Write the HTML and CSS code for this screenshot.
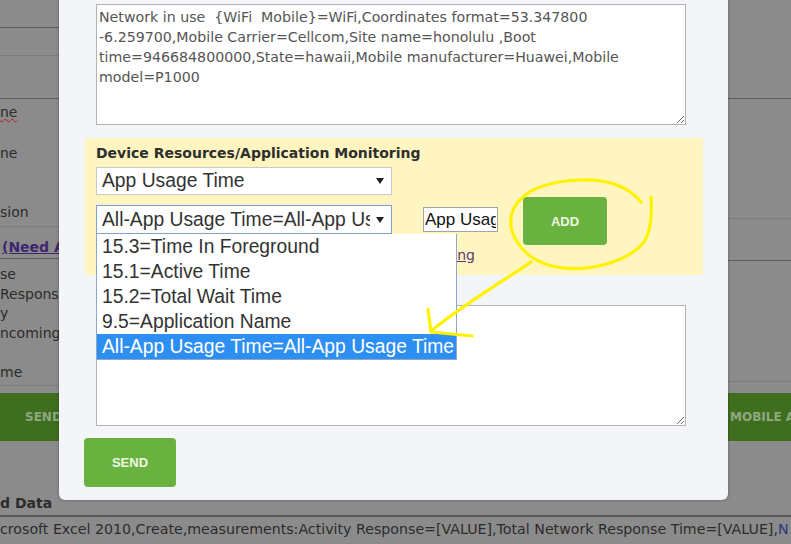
FILE: index.html
```html
<!DOCTYPE html>
<html lang="en">
<head>
<meta charset="utf-8">
<title>Device Resources</title>
<link rel="stylesheet" href="styles.css">
</head>
<body>
<div class="page">
  <div class="cols">
    <div class="col">
      <div class="row dk h28"></div>
      <div class="row lt h28"></div>
      <div class="row dk h43"></div>
      <div class="row lt h128 pad3">
        <div class="t"><span class="spell">ne</span></div>
        <div class="t mt21">ne</div>
        <div class="t mt39">sion</div>
      </div>
      <div class="row dk h32 pad10"><a class="need">(Need Approval)</a></div>
      <div class="row lt h127 pad6">
        <div class="t2">se</div>
        <div class="t2">Response Time</div>
        <div class="t2">y</div>
        <div class="t2">ncoming</div>
        <div class="t2"></div>
        <div class="t2">me</div>
      </div>
    </div>
    <div class="col">
      <div class="row dk h99"></div>
      <div class="row lt h120"></div>
      <div class="row dk h42"></div>
      <div class="row lt h121"></div>
    </div>
  </div>
  <div class="greenbar">
    <span class="gb-left">SEND</span>
    <span class="gb-right">MOBILE APP</span>
  </div>
  <div class="bottom">
    <div class="bottom-title">d Data</div>
    <div class="data-line">crosoft Excel 2010,Create,measurements:Activity Response=[VALUE],Total Network Response Time=[VALUE],<span class="navy">N</span></div>
  </div>
</div>

<div class="modal">
  <textarea class="ta ta1" readonly>Network in use  {WiFi  Mobile}=WiFi,Coordinates format=53.347800 -6.259700,Mobile Carrier=Cellcom,Site name=honolulu ,Boot time=946684800000,State=hawaii,Mobile manufacturer=Huawei,Mobile model=P1000</textarea>
  <div class="panel">
    <div class="panel-title">Device Resources/Application Monitoring</div>
    <div class="sel sel1"><span class="sel-text">App Usage Time</span><svg class="caret" viewBox="0 0 8 6"><path d="M0 0H8L4 6Z"/></svg></div>
    <div class="ctrl-row">
      <div class="sel-wrap">
        <div class="sel sel2"><span class="sel-text">All-App Usage Time=All-App Usage Time</span><svg class="caret" viewBox="0 0 8 6"><path d="M0 0H8L4 6Z"/></svg></div>
        <ul class="dropdown">
          <li>15.3=Time In Foreground</li>
          <li>15.1=Active Time</li>
          <li>15.2=Total Wait Time</li>
          <li>9.5=Application Name</li>
          <li class="hl">All-App Usage Time=All-App Usage Time</li>
        </ul>
      </div>
      <input class="small-input" type="text" value="App Usage Time" readonly>
      <button class="btn btn-add" type="button">ADD</button>
    </div>
    <div class="link-row"><a class="plink">Add New Monitoring</a></div>
  </div>
  <textarea class="ta ta2" readonly></textarea>
  <button class="btn btn-send" type="button">SEND</button>
</div>

<svg class="annot" viewBox="0 0 791 544" width="791" height="544">
  <path d="M641 202 C628 186 606 179 580 180 C548 181 522 190 513 210 C505 230 520 258 552 266 C585 274 628 262 644 242 C652 230 652 212 651 197"/>
  <path d="M531 262 C505 280 470 300 431 331"/>
  <path d="M428 309 L431 332 L472 336"/>
</svg>
</body>
</html>
```

FILE: styles.css
```css
* { box-sizing: border-box; }
html, body { margin: 0; padding: 0; }
body {
  width: 791px;
  height: 544px;
  overflow: hidden;
  position: relative;
  background: #8b8b8b;
  font-family: "DejaVu Sans", sans-serif;
  font-size: 13px;
  color: #2b2b2b;
}

/* background page (dimmed) */
.cols { display: flex; height: 393px; }
.col { flex: 1 1 50%; display: flex; flex-direction: column; }
.row { flex: none; white-space: nowrap; overflow: hidden; }
.dk { border-bottom: 1px solid #5e5e5e; }
.lt { border-bottom: 1px solid #7c7c7c; }
.h28 { height: 28px; }
.h43 { height: 43px; }
.h128 { height: 128px; }
.h32 { height: 32px; }
.h127 { height: 127px; }
.h99 { height: 99px; }
.h120 { height: 120px; }
.h42 { height: 42px; }
.h121 { height: 121px; }
.pad3 { padding-top: 3px; }
.pad6 { padding-top: 6px; }
.pad10 { padding-top: 10px; }
.t { line-height: 20px; font-size: 14px; }
.mt21 { margin-top: 21px; }
.mt39 { margin-top: 39px; }
.t2 { line-height: 19.5px; height: 19.5px; font-size: 14px; }
.spell { text-decoration: underline wavy #b0202a; text-decoration-thickness: 1px; }
.need {
  display: block;
  line-height: 20px;
  padding-left: 2px;
  font-size: 14px;
  font-weight: bold;
  color: #3e2670;
  text-decoration: underline;
}

.greenbar {
  display: grid;
  grid-template-columns: 730px 1fr;
  height: 48px;
  align-items: center;
  background: #3f6e1e;
  color: #8fa882;
  font-size: 12px;
  font-weight: bold;
  white-space: nowrap;
  overflow: hidden;
}
.gb-left { padding-left: 25px; }

.bottom { padding-top: 52px; }
.bottom-title {
  font-size: 14px;
  font-weight: bold;
  line-height: 20px;
  height: 24px;
  border-bottom: 2px solid #5a5a5a;
}
.data-line {
  padding-top: 2px;
  line-height: 20px;
  font-size: 14.2px;
  white-space: nowrap;
}
.navy { color: #263a78; }

/* modal */
.modal {
  position: absolute;
  left: 59px;
  top: -30px;
  width: 669px;
  padding: 34px 25px 13px 26px;
  background: #f3f5f9;
  border-radius: 6px;
  box-shadow: 0 0 3px rgba(0, 0, 0, 0.35);
}
.ta {
  display: block;
  width: 590px;
  height: 121px;
  margin: 0 0 0 11px;
  padding: 2px 2px;
  border: 1px solid #b3b3b3;
  background: #fff;
  font-family: "DejaVu Sans", sans-serif;
  font-size: 14.2px;
  line-height: 20px;
  color: #555;
  outline: none;
}
.ta1 { margin-bottom: 13px; }
.ta2 { margin-top: 30px; }

.panel {
  height: 137px;
  background: #fff5c1;
  padding: 6px 11px 0;
}
.panel-title {
  font-size: 14px;
  font-weight: bold;
  line-height: 18px;
  color: #2e2e2e;
}
.sel {
  display: flex;
  align-items: center;
  width: 296px;
  background: #fff;
  border: 1px solid #c9c9c9;
  padding: 0 7px 0 5px;
  font-family: "Liberation Sans", Arial, sans-serif;
  font-size: 19.3px;
  color: #333;
}
.sel1 { height: 28px; margin-top: 5px; }
.sel2 { height: 29px; border-color: #7ea2d2; }
.sel-text { flex: 1; overflow: hidden; white-space: nowrap; }
.caret { width: 8px; height: 6px; margin-left: 6px; fill: #222; flex: none; }

.ctrl-row { display: flex; align-items: flex-start; margin-top: 2px; height: 48px; }
.sel-wrap { position: relative; margin-top: 8px; }
.dropdown {
  position: absolute;
  top: 100%;
  left: 0;
  width: 361px;
  margin: 0;
  padding: 0;
  list-style: none;
  background: #fff;
  border: 1px solid #8da6cc;
  border-top: none;
  font-family: "Liberation Sans", Arial, sans-serif;
  font-size: 19.3px;
  color: #333;
  z-index: 5;
}
.dropdown li { height: 25px; line-height: 25px; padding-left: 5px; white-space: nowrap; }
.dropdown .hl { background: #2e8ff2; color: #fff; }

.small-input {
  width: 75px;
  height: 25px;
  margin: 10px 0 0 31px;
  padding: 0 1px;
  border: 1px solid #a3a3a3;
  background: #fff;
  font-family: "Liberation Sans", Arial, sans-serif;
  font-size: 17px;
  color: #111;
  outline: none;
}
.btn {
  border: none;
  border-radius: 4px;
  background: #6ab23f;
  color: #eef6e4;
  font-family: "Liberation Sans", Arial, sans-serif;
  font-size: 13px;
  font-weight: bold;
  padding: 0;
}
.btn-add { width: 84px; height: 48px; margin-left: 25px; }
.btn-send { display: block; width: 92px; height: 49px; margin: 12px 0 0 -1px; }

.link-row {
  width: 379px;
  margin-top: 2px;
  text-align: right;
  line-height: 16px;
  font-size: 14px;
}
.plink { color: #5b3c74; text-decoration: underline; }

.annot {
  position: absolute;
  left: 0;
  top: 0;
  z-index: 10;
  pointer-events: none;
  fill: none;
  stroke: #fff200;
  stroke-width: 3.2;
  stroke-linecap: round;
  stroke-linejoin: round;
}
```
